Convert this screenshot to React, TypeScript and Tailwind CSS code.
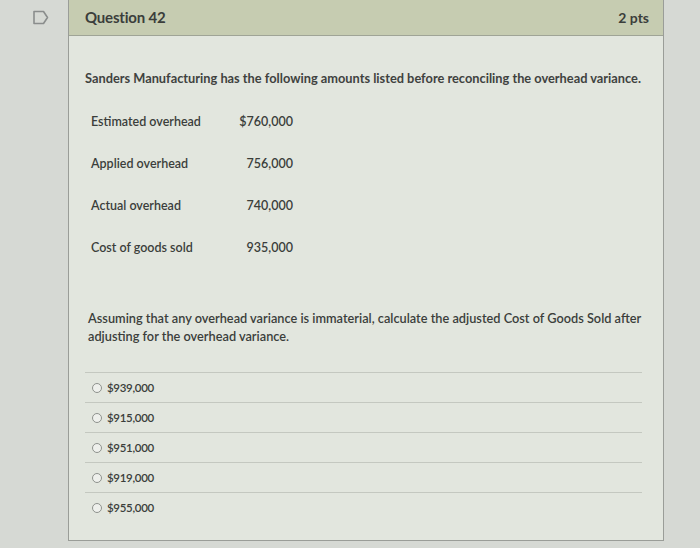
import React from "react";

const rows = [
  { label: "Estimated overhead", value: "$760,000" },
  { label: "Applied overhead", value: "756,000" },
  { label: "Actual overhead", value: "740,000" },
  { label: "Cost of goods sold", value: "935,000" },
];

const answers = ["$939,000", "$915,000", "$951,000", "$919,000", "$955,000"];

const BookmarkIcon = () => (
  <svg width="16" height="15" viewBox="0 0 16 15" fill="none">
    <path
      d="M1 1.5h9.5l4 6-4 6H1z"
      stroke="#8a8d8c"
      strokeWidth="1.6"
      strokeLinejoin="round"
    />
  </svg>
);

export default function App() {
  return (
    <div
      className="flex h-[548px] w-[700px] overflow-hidden bg-[#d6d9d4] text-[#3b3e3b]"
      style={{ fontFamily: "Lato, 'Open Sans', sans-serif" }}
    >
      <div className="w-[68px] shrink-0 pl-[33px] pt-[10px]">
        <BookmarkIcon />
      </div>
      <div className="mb-[7px] flex w-[596px] flex-col border border-t-0 border-[#9a9d98] bg-[#e2e6de]">
        <div className="flex h-[36px] shrink-0 items-center justify-between border-b border-[#9fa496] bg-[#c6ccb1] pl-[16px] pr-[14px]">
          <span className="text-[15px] font-bold tracking-[-0.2px]">Question 42</span>
          <span className="text-[14px] font-bold">2 pts</span>
        </div>
        <div className="px-[16px] pt-[33px]">
          <p className="whitespace-nowrap text-[12.8px] font-bold leading-[18px] text-[#3f423f]">
            Sanders Manufacturing has the following amounts listed before reconciling the overhead variance.
          </p>
          <div className="mt-[26px] flex flex-col gap-[24px] pl-[6px]">
            {rows.map((r) => (
              <div key={r.label} className="flex h-[18px] items-center text-[12.5px] font-semibold">
                <span className="w-[144px]">{r.label}</span>
                <span className="w-[58px] text-right">{r.value}</span>
              </div>
            ))}
          </div>
          <p className="mt-[52px] pl-[3px] text-[12.75px] font-semibold leading-[18px]">
            Assuming that any overhead variance is immaterial, calculate the adjusted Cost of Goods Sold after adjusting for the overhead variance.
          </p>
          <div className="mt-[27px] mr-[5px] flex flex-col border-t border-[#c4c8c0]">
            {answers.map((a, i) => (
              <div
                key={a}
                className={`flex h-[30px] items-center gap-[5px] pl-[7px] ${
                  i < answers.length - 1 ? "border-b border-[#c4c8c0]" : ""
                }`}
              >
                <span className="h-[10px] w-[10px] rounded-full border border-[#8e928d] bg-[#eef0ec]" />
                <span className="text-[11.5px] font-semibold tracking-[-0.3px]">{a}</span>
              </div>
            ))}
          </div>
        </div>
      </div>
    </div>
  );
}
